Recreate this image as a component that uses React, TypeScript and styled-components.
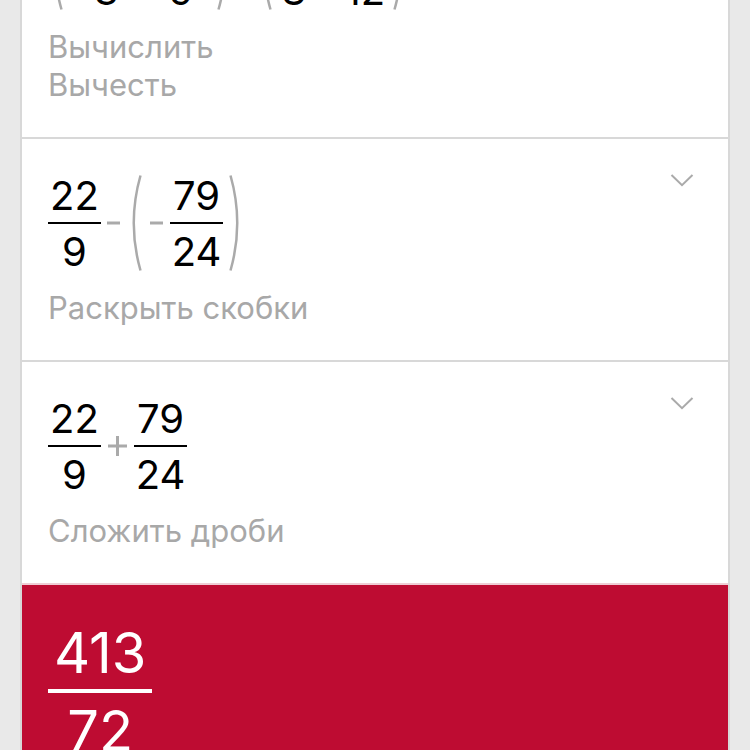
import React from "react";
import styled, { createGlobalStyle } from "styled-components";

const GlobalStyle = createGlobalStyle`
  * { box-sizing: border-box; }
  html, body { margin: 0; height: 100%; overflow: hidden; background: #e9e9e9; }
  body { font-family: Inter, "Liberation Sans", sans-serif; color: #000; }
`;

const Sheet = styled.main`
  margin: -122px 20px 0;
  background: #fff;
  border: solid #d8d8d8;
  border-width: 0 2px;
`;

const Step = styled.section<{ $last?: boolean }>`
  display: flex;
  justify-content: space-between;
  align-items: flex-start;
  padding: 35px 34px 33px 26px;
  border-bottom: 2px solid ${(p) => (p.$last ? "#efcdd4" : "#d8d8d8")};
`;

const Body = styled.div`
  display: flex;
  flex-direction: column;
  gap: 18px;
  padding-top: 1px;
`;

const Expression = styled.div`
  display: flex;
  align-items: center;
  height: 96px;
`;

const FractionBox = styled.span<{ $large?: boolean }>`
  display: inline-flex;
  flex-direction: column;
  align-items: stretch;
  padding-top: ${(p) => (p.$large ? 0 : 2)}px;
  text-align: center;
  font-size: ${(p) => (p.$large ? 56 : 40)}px;
  line-height: 1;
`;

const Part = styled.span<{ $large?: boolean }>`
  padding: 0 ${(p) => (p.$large ? 6 : 2)}px;
`;

const Bar = styled.span<{ $large?: boolean }>`
  height: ${(p) => (p.$large ? 4 : 2)}px;
  margin: ${(p) => (p.$large ? "8px 0 10px" : "6px 0 8px")};
  background: currentColor;
`;

const Symbol = styled.svg<{ $before?: number; $after?: number }>`
  flex: none;
  fill: none;
  stroke: #aaa;
  stroke-width: 3;
  margin-left: ${(p) => p.$before ?? 0}px;
  margin-right: ${(p) => p.$after ?? 0}px;
`;

const Labels = styled.div`
  font-size: 31px;
  line-height: 38px;
  color: #a8a8a8;
`;

const Toggle = styled.button`
  display: flex;
  padding: 0;
  border: 0;
  background: none;
  cursor: pointer;
`;

const Result = styled.section`
  padding: 40px 26px;
  background: #be0c32;
  color: #fff;
`;

type Space = { before?: number; after?: number };

const Fraction = ({ top, bottom, large }: { top: string; bottom: string; large?: boolean }) => (
  <FractionBox $large={large}>
    <Part $large={large}>{top}</Part>
    <Bar $large={large} />
    <Part $large={large}>{bottom}</Part>
  </FractionBox>
);

const Minus = ({ before = 5, after = 12 }: Space) => (
  <Symbol $before={before} $after={after} width="14" height="18" aria-label="минус">
    <path d="M1 9H14" />
  </Symbol>
);

const Plus = () => (
  <Symbol $before={6} $after={7} width="20" height="20" aria-label="плюс">
    <path d="M1 10H20M10.5 0V20" />
  </Symbol>
);

const Open = ({ before, after = 7 }: Space) => (
  <Symbol $before={before} $after={after} width="10" height="96" aria-label="(">
    <path strokeWidth="2.5" d="M8.5 .5Q-5 48 8.5 95.5" />
  </Symbol>
);

const Close = ({ before = 6, after }: Space) => (
  <Symbol $before={before} $after={after} width="10" height="96" aria-label=")">
    <path strokeWidth="2.5" d="M1.5 .5Q15 48 1.5 95.5" />
  </Symbol>
);

const Expand = () => (
  <Toggle aria-label="Показать подробности">
    <svg width="24" height="14" fill="none" stroke="#aaa" strokeWidth="2">
      <path d="M1.5 1L12 11.2L22.5 1" />
    </svg>
  </Toggle>
);

export default function App() {
  return (
    <>
      <GlobalStyle />
      <Sheet>
        <Step>
          <Body>
            <Expression>
              <Open before={5} after={29} />
              <Fraction top="8" bottom="3" />
              <Minus before={16} after={16} />
              <Fraction top="2" bottom="9" />
              <Close before={21} />
              <Minus before={5} after={16} />
              <Open after={8} />
              <Fraction top="5" bottom="8" />
              <Minus before={8} after={12} />
              <Fraction top="19" bottom="12" />
              <Close />
            </Expression>
            <Labels>
              <div>Вычислить</div>
              <div>Вычесть</div>
            </Labels>
          </Body>
        </Step>
        <Step>
          <Body>
            <Expression>
              <Fraction top="22" bottom="9" />
              <Minus />
              <Open />
              <Minus before={0} after={7} />
              <Fraction top="79" bottom="24" />
              <Close />
            </Expression>
            <Labels>Раскрыть скобки</Labels>
          </Body>
          <Expand />
        </Step>
        <Step $last>
          <Body>
            <Expression>
              <Fraction top="22" bottom="9" />
              <Plus />
              <Fraction top="79" bottom="24" />
            </Expression>
            <Labels>Сложить дроби</Labels>
          </Body>
          <Expand />
        </Step>
        <Result>
          <Fraction top="413" bottom="72" large />
        </Result>
      </Sheet>
    </>
  );
}
